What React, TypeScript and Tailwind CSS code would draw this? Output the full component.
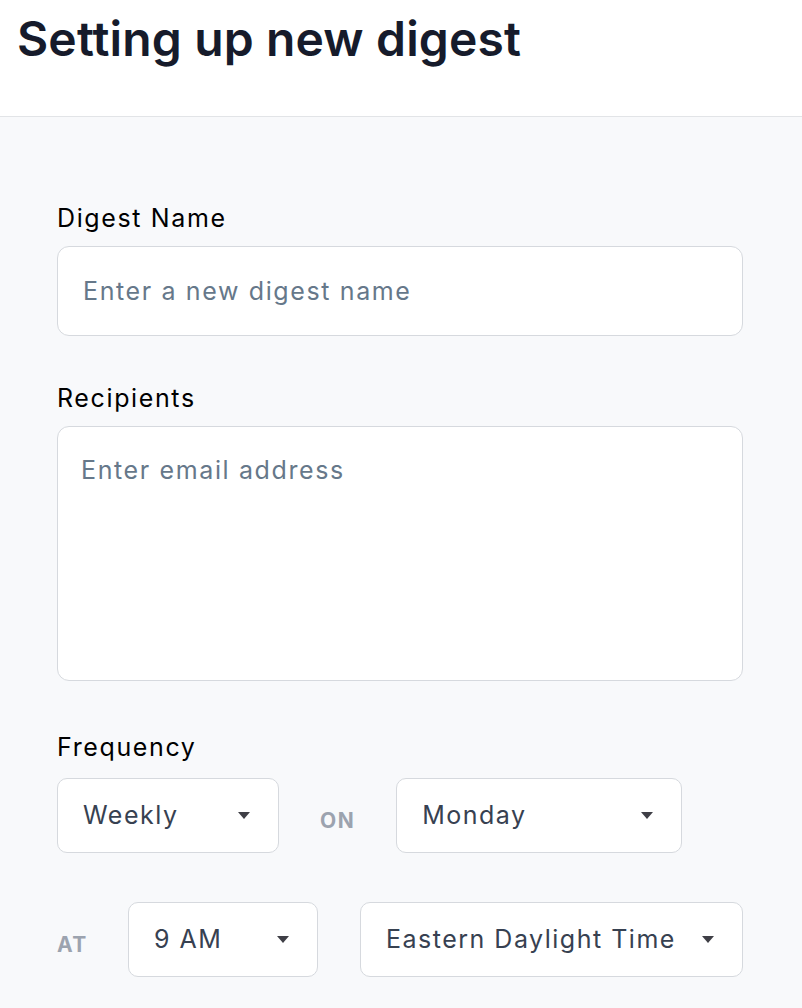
import { ReactNode } from 'react'

function Caret() {
  return (
    <svg width="12" height="7" viewBox="0 0 12 7" className="shrink-0">
      <path d="M0 0 L12 0 L6 7 Z" fill="#3f3f46" />
    </svg>
  )
}

function Select({ value, className }: { value: string; className: string }) {
  return (
    <div
      className={`h-[75px] flex items-center justify-between bg-white border border-[#d6d9de] rounded-[10px] pl-[25px] pr-[28px] text-[25px] tracking-[0.06em] text-[#374151] ${className}`}
    >
      <span>{value}</span>
      <Caret />
    </div>
  )
}

function Label({ children, className = '' }: { children: ReactNode; className?: string }) {
  return <div className={`text-[25px] leading-[32px] tracking-[0.065em] text-black ${className}`}>{children}</div>
}

export default function App() {
  return (
    <div className="min-h-screen bg-[#f8f9fb] font-['Inter',sans-serif]">
      <div className="h-[117px] bg-white border-b border-[#e2e4e7] pl-[17px] pt-[9px]">
        <h1 className="text-[48px] leading-[60px] font-semibold text-[#161b2b] tracking-[0.003em]">
          Setting up new digest
        </h1>
      </div>

      <div className="pl-[57px] pr-[59px] pt-[85px] pb-10">
        <Label>Digest Name</Label>
        <div className="mt-[12px] h-[90px] bg-white border border-[#d6d9de] rounded-[12px] flex items-center px-[25px] pt-[2px] text-[25px] tracking-[0.065em] text-[#66788a]">
          Enter a new digest name
        </div>

        <Label className="mt-[46px]">Recipients</Label>
        <div className="mt-[12px] h-[255px] bg-white border border-[#d6d9de] rounded-[12px] px-[23px] pt-[27px] text-[25px] leading-[32px] tracking-[0.065em] text-[#66788a]">
          Enter email address
        </div>

        <Label className="mt-[50px]">Frequency</Label>
        <div className="mt-[15px] flex items-center">
          <Select value="Weekly" className="w-[222px]" />
          <span className="ml-[41px] mr-[41px] mt-[10px] text-[21px] font-bold tracking-[0.07em] text-[#9ca3af]">ON</span>
          <Select value="Monday" className="w-[286px]" />
        </div>

        <div className="mt-[49px] flex items-center">
          <span className="mt-[10px] text-[21px] font-bold tracking-[0.07em] text-[#9ca3af] w-[71px]">AT</span>
          <Select value="9 AM" className="w-[190px]" />
          <Select value="Eastern Daylight Time" className="w-[383px] ml-[42px]" />
        </div>
      </div>
    </div>
  )
}
